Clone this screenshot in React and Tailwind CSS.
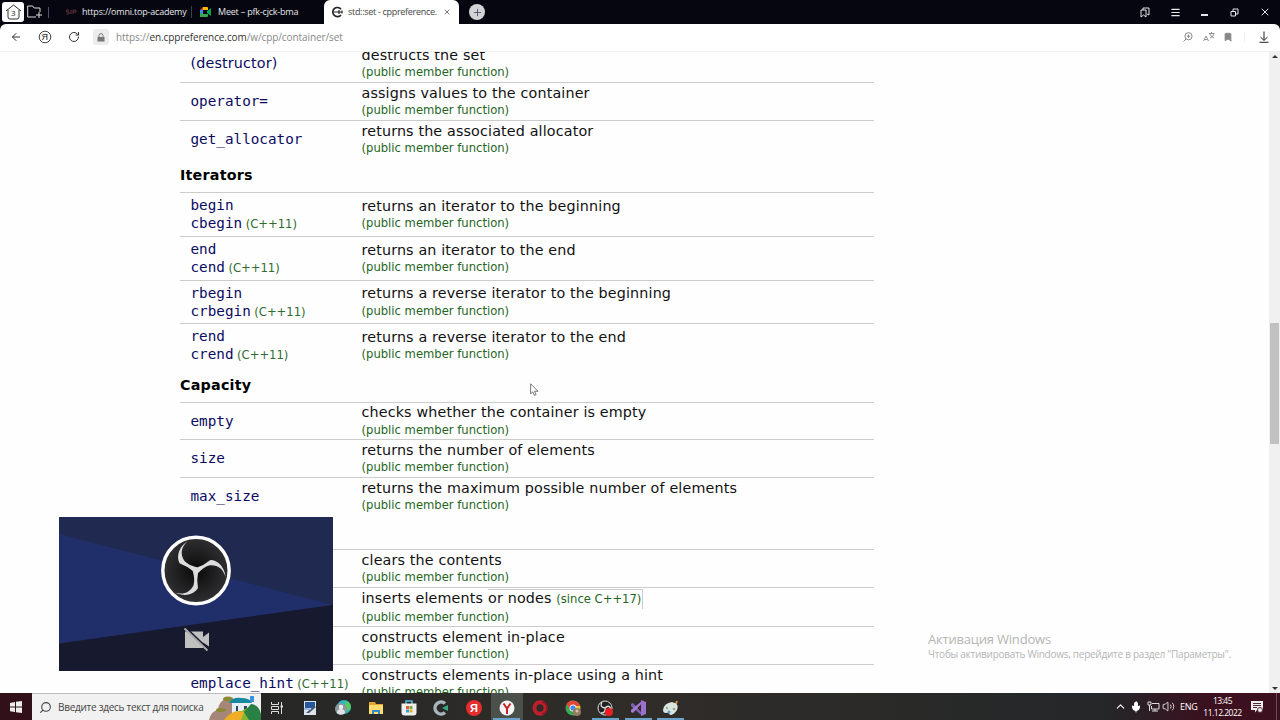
import {
    ArrowLeft,
    Bookmark,
    ChevronUp,
    Menu,
    Mic,
    Plus,
    RotateCw,
    Search,
    Volume2,
    X,
} from "lucide-react";

const sections = [
    {
        title: null,
        rows: [
            { names: ["(destructor)"], plain: true, text: "destructs the set", height: "h-[38px]" },
            { names: ["operator="], text: "assigns values to the container", height: "h-[38px]" },
            { names: ["get_allocator"], text: "returns the associated allocator", height: "h-[38px]" },
        ],
    },
    {
        title: "Iterators",
        titleHeight: "h-[34px]",
        rows: [
            { names: ["begin", "cbegin"], text: "returns an iterator to the beginning", height: "h-[44px]" },
            { names: ["end", "cend"], text: "returns an iterator to the end", height: "h-[44px]" },
            { names: ["rbegin", "crbegin"], text: "returns a reverse iterator to the beginning", height: "h-[43px]" },
            { names: ["rend", "crend"], text: "returns a reverse iterator to the end", height: "h-[44px]" },
        ],
    },
    {
        title: "Capacity",
        titleHeight: "h-[35px]",
        rows: [
            { names: ["empty"], text: "checks whether the container is empty", height: "h-[37px]" },
            { names: ["size"], text: "returns the number of elements", height: "h-[38px]" },
            { names: ["max_size"], text: "returns the maximum possible number of elements", height: "h-[38px]" },
        ],
    },
    {
        // the heading and the first names of this group sit behind the camera preview
        title: "",
        titleHeight: "h-[34px]",
        rows: [
            { names: [], text: "clears the contents", height: "h-[38px]" },
            { names: [], text: "inserts elements", since: true, height: "h-[39px]" },
            { names: [], text: "constructs element in-place", height: "h-[38px]" },
            { names: ["emplace_hint"], version: true, text: "constructs elements in-place using a hint", height: "h-[38px]" },
        ],
    },
];

function MemberRow({ row }) {
    return (
        <div className={`flex shrink-0 items-center border-t border-[#ccc] ${row.height}`}>
            <div className="w-[181.5px] shrink-0 whitespace-nowrap pb-px pl-[10.5px] text-[#0b0b62]">
                {row.names.map((name, i) => (
                    <div key={name} className="h-[17.6px] leading-[17.6px]">
                        <span
                            className={
                                row.plain
                                    ? "text-[14.3px] tracking-[.15px]"
                                    : "font-['DejaVu_Sans_Mono',monospace] text-[14.3px]"
                            }
                        >
                            {name}
                        </span>
                        {(i === 1 || row.version) && (
                            <span className="ml-[3.5px] text-[11.6px] text-[#2f6b2f]">(C++11)</span>
                        )}
                    </div>
                ))}
            </div>
            <div className="whitespace-nowrap pt-px leading-[17.5px]">
                <div className="text-[14.3px] tracking-[.15px] text-[#111]">
                    {row.text}
                    {row.since && (
                        <span className="ml-[5px] inline-block border-r border-t border-[#ccc] pr-px">
                            or nodes <span className="text-[11.6px] tracking-normal text-[#1f651f]">(since C++17)</span>
                        </span>
                    )}
                </div>
                <div className="text-[11.6px] text-[#1f651f]">(public member function)</div>
            </div>
        </div>
    );
}

function TabBar() {
    return (
        <div className="flex h-6 shrink-0 items-center bg-[#05060f] font-['Open_Sans','Noto_Sans',sans-serif] text-[9px] tracking-[-.2px] text-gray-200">
            <div className="ml-0.5 flex h-[20px] w-[22px] items-center justify-center rounded-[3px] bg-white">
                <svg width="17" height="16" viewBox="0 0 17 16" fill="none" stroke="#333">
                    <path d="M1 7 8.5 1 16 7M3 6v7q0 2 2 2h7q2 0 2-2V6" />
                    <text x="6" y="11.5" fontSize="8" fill="#222" stroke="none">3</text>
                </svg>
            </div>
            <svg className="ml-[3px]" width="16" height="14" viewBox="0 0 16 14" fill="none" stroke="#ddd">
                <path d="M9 12H.7V1h5l1.5 2H13v4M12 7v6M9 10h6" />
            </svg>
            <div className="ml-[5px] h-[11px] w-px bg-gray-600" />
            <svg className="ml-[17px]" width="11" height="6" viewBox="0 0 11 6" fill="none" stroke="#63303f">
                <path d="M3 1H.5v2H3v2H.5M5 1v4M7 5V1h3v2H7" />
            </svg>
            <div className="ml-[5px] w-[109px] whitespace-nowrap">https://omni.top-academy</div>
            <div className="h-3 w-px bg-gray-700" />
            <svg className="ml-[7px]" width="12" height="10" viewBox="0 0 12 10">
                <path d="M1 3 4 0v3z" fill="#e94235" />
                <path d="M1 3h3v4H1z" fill="#4285f4" />
                <path d="M4 0h4q1 0 1 1v2H4z" fill="#fbbc04" />
                <path d="M1 6h3v1h5v2q0 1-1 1H1z" fill="#34a853" />
                <path d="M8 4 12 1v8L8 6z" fill="#00a550" />
            </svg>
            <div className="ml-[7px] w-[106px] whitespace-nowrap">Meet – pfk-cjck-bma</div>
            <div className="flex h-full w-[135px] items-center rounded-t-[6px] bg-white pl-[7px] text-[#444]">
                <svg width="12" height="12" viewBox="0 0 12 12" fill="none" stroke="#222" strokeWidth="1.7">
                    <path d="M10 3.2A4.6 4.6 0 1 0 10 9" />
                    <path d="M3 6h8M8 4v4M11 4.5v3" strokeWidth="1.2" />
                </svg>
                <span className="ml-[5px] w-[92px] whitespace-nowrap tracking-[-.3px]">
                    std::set - cppreference.
                </span>
                <X className="ml-[3px]" size={8} strokeWidth={2.2} />
            </div>
            <div className="ml-[10px] flex size-4 items-center justify-center rounded-full bg-[#d2d2d7] text-gray-600">
                <Plus size={11} />
            </div>
            <div className="ml-auto flex items-center text-gray-200">
                <svg width="10" height="11" viewBox="0 0 10 11" fill="none" stroke="currentColor">
                    <path d="M1 3h5v7L3.5 8 1 10zM3 3V1h6v7l-2-1" />
                </svg>
                <Menu className="ml-[20px]" size={11} strokeWidth={2.7} />
                <div className="ml-[20px] mt-[6px] h-[1.5px] w-[7px] bg-gray-200" />
                <svg className="ml-[22px]" width="9" height="9" viewBox="0 0 9 9" fill="none" stroke="currentColor">
                    <path d="M1 3.5h4.5V8H1zM3 3V1h5v5H6" />
                </svg>
                <X className="ml-[20px] mr-[9px]" size={12} />
            </div>
        </div>
    );
}

function AddressBar() {
    return (
        <div className="shrink-0 bg-[#05060f]">
            <div className="flex h-7 items-center rounded-t-[6px] border-b border-[#f0f0f0] bg-white pb-px text-[#333]">
                <ArrowLeft className="ml-[10px]" size={12} />
                <svg className="ml-[16px]" width="14" height="14" viewBox="0 0 14 14" fill="none" stroke="#444">
                    <circle cx="7" cy="7" r="5.8" />
                    <text x="3.6" y="10.2" fontSize="9" fill="#222" stroke="none" fontFamily="Liberation Sans">Я</text>
                </svg>
                <RotateCw className="ml-[16px]" size={12} />
                <div className="ml-[13px] flex size-4 items-center justify-center rounded-[3px] bg-[#ececec] text-[#777]">
                    <svg width="8" height="9" viewBox="0 0 8 9">
                        <path d="M.5 4h7v4.500h-7z" fill="currentColor" />
                        <path d="M2 4V2.500q0-1.800 2-1.800t2 1.800V4" fill="none" stroke="currentColor" />
                    </svg>
                </div>
                <div className="ml-[7px] whitespace-nowrap font-['Open_Sans','Noto_Sans',sans-serif] text-[10px] tracking-[-.09px] text-[#888]">
                    https://<span className="text-[#333]">en.cppreference.com</span>/w/cpp/container/set
                </div>
                <div className="ml-auto flex items-center text-[#888]">
                    <svg width="10" height="10" viewBox="0 0 10 10" fill="none" stroke="currentColor">
                        <circle cx="5.5" cy="4.2" r="3.6" />
                        <path d="M3 7 .5 9.5M3.8 4.2h3.5M5.5 2.5V6" />
                    </svg>
                    <svg className="ml-[10px]" width="12" height="10" viewBox="0 0 12 10" fill="none" stroke="currentColor" strokeWidth=".9">
                        <path d="m.5 9 2.500-5 2.500 5M1.500 7.500h3M6 1.500h5.500M8.500 0v1.500M7 2q1 3 4 4M11 2q-1 3-4 4" />
                    </svg>
                    <Bookmark className="ml-[8px]" size={10} fill="currentColor" />
                    <div className="ml-[11px] h-[10px] w-px bg-[#eee]" />
                    <svg className="ml-[14px] mr-[11px] text-[#222]" width="10" height="12" viewBox="0 0 10 12" fill="none" stroke="currentColor">
                        <path d="M5 .5v8.8M1.5 6 5 9.4 8.5 6M.5 11.3h9" />
                    </svg>
                </div>
            </div>
        </div>
    );
}

function ObsPreview() {
    return (
        <svg className="absolute left-[59px] top-[517px]" width="274" height="153.5" viewBox="0 0 274 153.5">
            <defs>
                <radialGradient id="disc">
                    <stop offset="0" stopColor="#080808" />
                    <stop offset=".45" stopColor="#1c1b1c" />
                    <stop offset="1" stopColor="#302f31" />
                </radialGradient>
            </defs>
            <path d="M0 0h274v154H0z" fill="#20294f" />
            <path d="M0 17 274 88 0 127z" fill="#202f69" />
            <path d="M0 126.500 274 88v66H0z" fill="#17192f" />
            <circle cx="137" cy="53.500" r="33.200" fill="url(#disc)" stroke="#fff" strokeWidth="3.400" />
            <g fill="#dcdcdc">
                <path id="blade" d="M128 24.500C117.500 32 118 43 121 46.500Q129 49.500 134.500 54.500L138.500 50.500Q130 48.500 125.500 44C121 37 122 31 128 24.500Z" />
                <use href="#blade" transform="rotate(120 137 53.500)" />
                <use href="#blade" transform="rotate(240 137 53.500)" />
                <circle cx="137" cy="53.500" r="2.800" />
            </g>
            <path d="M126 114.500h18v5.500l6-4.500v14l-6-4v5.500h-18z" fill="#c0c0c0" />
            <path d="m127 111 23 22" stroke="#17192f" strokeWidth="2" />
            <path d="m125.500 111.500 23 22" stroke="#aaa" strokeWidth="2" />
        </svg>
    );
}

function SearchArt() {
    return (
        <svg className="ml-auto" width="52" height="26" viewBox="0 0 52 26">
            <path d="M0 26q2-9 9-10 1-10 10-12 6 1 5 11l-2 11z" fill="#a58678" />
            <ellipse cx="19" cy="5" rx="5" ry="2.500" fill="#8c8936" />
            <ellipse cx="12" cy="16" rx="5" ry="2" fill="#8c8936" />
            <path d="M23 8h18v17H23z" fill="#e5eef3" />
            <path d="M20 9q3-6 12-5 9 0 11 5z" fill="#1688a0" />
            <path d="M27 12h2v5h-2zM35 12h3v6h-3z" fill="#344655" />
            <path d="M15 26q8-10 18-9 10-8 19 4v5z" fill="#83b632" />
            <path d="M15 26q8-11 20-8l-3 8z" fill="#f0ad25" />
            <path d="m35 18 7-8q8 1 10 10v6H40z" fill="#2a8145" />
            <path d="M41 2h4v6h-4z" fill="#3b92e1" />
        </svg>
    );
}

function AppIcon({ name }) {
    const icons = {
        tasks: (
            <g fill="none" stroke="#ddd">
                <path d="M4.500 4v2.500h7V4M4.500 16v-2.500h7V16M4.500 8.500h7v3h-7zM14.500 4v12" />
                <path d="M13.500 8.500h2.500" strokeWidth="2" />
            </g>
        ),
        monitor: (
            <>
                <path d="M4 3h12v14H4z" fill="#dce5ed" />
                <path d="M5 4h10v6H5z" fill="#24579b" />
                <path d="m6 15 8-7 2 1-7 6z" fill="#46566b" />
                <path d="M4 10h5l2 2H4z" fill="#98bae5" />
            </>
        ),
        edge: (
            <>
                <circle cx="11" cy="9" r="7" fill="#28b8c8" />
                <path d="M12 3q8 2 5 9l-5 1z" fill="#55cc62" />
                <circle cx="8" cy="11" r="6" fill="#8a98a0" />
                <circle cx="8" cy="9" r="2.200" fill="#eee" />
                <path d="M4 15q0-4 4-4t4 4q-4 3-8 0z" fill="#e2e2e2" />
            </>
        ),
        folder: (
            <>
                <path d="M3 4h6l1 2h7v10H3z" fill="#e2a82d" />
                <path d="M3 7h14v9H3z" fill="#ffdd70" />
                <path d="M6 12h8v4h-2v-2H8v2H6z" fill="#368bc5" />
            </>
        ),
        store: (
            <>
                <path d="M7 6V3h6v3" fill="none" stroke="#54bde6" strokeWidth="1.500" />
                <path d="M2.500 5.500h15v9q0 3-3 3h-9q-3 0-3-3z" fill="#eee" />
                <path d="M7 8h3v3H7z" fill="#e35a3c" />
                <path d="M10.500 8h3v3h-3z" fill="#7dad36" />
                <path d="M7 11.500h3v3H7z" fill="#389ed3" />
                <path d="M10.500 11.500h3v3h-3z" fill="#e2ae25" />
            </>
        ),
        cpp: (
            <>
                <path d="M14 5.500A6 6 0 1 0 14 14.500" fill="none" stroke="#a7b5bd" strokeWidth="3.500" />
                <path d="m11 10 6-3v6z" fill="#37a985" />
            </>
        ),
        yandex: (
            <>
                <circle cx="10" cy="10" r="8" fill="#e52d2b" />
                <text x="6" y="14" fontSize="11" fontWeight="bold" fill="#fff" fontFamily="Liberation Sans">Я</text>
            </>
        ),
        browser: (
            <>
                <circle cx="10" cy="10" r="7.500" fill="#f5f5f5" />
                <path d="m6.500 5.500 3.500 5 3.500-5M10 10v6" fill="none" stroke="#c62328" strokeWidth="2" />
            </>
        ),
        opera: (
            <>
                <ellipse cx="10" cy="10" rx="5.500" ry="5.800" fill="none" stroke="#bd202c" strokeWidth="4" />
                <path d="M12 4q5 1 5 6t-5 6" fill="none" stroke="#8d1722" strokeWidth="1.500" />
            </>
        ),
        chrome: (
            <>
                <circle cx="10" cy="10" r="7.500" fill="#38a852" />
                <path d="M3.500 6Q7 1 12 3q4 1 5 5h-7L7 12z" fill="#e64638" />
                <path d="M10 8h7.300q.8 7-7 9.500L13 12z" fill="#f5c52c" />
                <circle cx="10" cy="10" r="3.500" fill="#eee" />
                <circle cx="10" cy="10" r="2.600" fill="#4389e8" />
                <circle cx="14" cy="14" r="4" fill="#937a62" />
                <circle cx="14" cy="13" r="1.500" fill="#d6c2a5" />
            </>
        ),
        obs: (
            <>
                <circle cx="10" cy="10" r="7" fill="#222" stroke="#ddd" />
                <path d="M7 4q-3 5 3 6 4-4 6 1M10 10q1 5-4 5" fill="none" stroke="#ddd" strokeWidth="1.400" />
                <circle cx="14" cy="14" r="4" fill="#ed1d24" />
            </>
        ),
        studio: (
            <>
                <path d="m3 6 2-1 8 9 1 3-2-1-9-8z" fill="#8060b7" />
                <path d="m3 14 2 1 9-10V3L3 12z" fill="#a57bd2" />
                <path d="m13 2 5 2v12l-5 2z" fill="#9b70cf" />
            </>
        ),
        paint: (
            <>
                <path d="M16 3 12 13" stroke="#d29045" strokeWidth="2" />
                <path d="M2 12q1-7 9-8 8 2 5 8-3 5-7 5-1-3-4-2-3 0-3-3z" fill="#dce4df" />
                <circle cx="6" cy="10" r="1.200" fill="#8fb8a0" />
                <circle cx="13" cy="11" r="1.200" fill="#8ea67a" />
                <circle cx="8" cy="14" r="1.500" fill="#57a3c5" />
            </>
        ),
    };
    return <svg width="20" height="20" viewBox="0 0 20 20">{icons[name]}</svg>;
}

const apps = ["tasks", "monitor", "edge", "folder", "store", "cpp", "yandex", "browser", "opera", "chrome", "obs", "studio", "paint"];
const running = ["browser", "obs", "studio", "paint"];

function Taskbar() {
    return (
        <div className="flex h-[27px] shrink-0 bg-linear-to-r from-[#202323] via-[#302d29] to-[#202428] font-['Open_Sans','Noto_Sans',sans-serif] text-white">
            <div className="flex w-8 items-center justify-center bg-[#321019]">
                <svg width="12" height="12" viewBox="0 0 12 12" fill="#eee">
                    <path d="M0 2 5 1v4.500H0zM6 .8 12 0v5.500H6zM0 6.500h5V11l-5-.8zM6 6.500h6V12l-6-.8z" />
                </svg>
            </div>
            <div className="flex w-[229px] items-center border-t border-[#bbb] bg-[#f1f1f1] text-[#444]">
                <Search className="ml-[7px] shrink-0 -scale-x-100" size={13} />
                <span className="ml-[6px] whitespace-nowrap text-[10px] tracking-[-.27px]">Введите здесь текст для поиска</span>
                <SearchArt />
            </div>
            <div className="flex">
                {apps.map((app) => (
                    <div key={app} className={`flex w-[32.8px] flex-col items-center ${app === "browser" ? "bg-[#4b504b]" : ""}`}>
                        <div className="flex h-[25px] items-center pt-1">
                            <AppIcon name={app} />
                        </div>
                        {running.includes(app) && <div className="h-0.5 w-[27px] bg-[#6ba2cb]" />}
                    </div>
                ))}
            </div>
            <div className="ml-auto flex w-[172px] items-center bg-linear-to-r from-transparent to-[#3c101e] to-60%">
                <ChevronUp className="ml-[6px]" size={13} />
                <Mic className="ml-[3px]" size={12} fill="white" />
                <svg className="ml-[5px]" width="13" height="11" viewBox="0 0 13 11" fill="none" stroke="#ddd">
                    <path d="M5 2.500h7v5.500H4.500V5M5 10h6M8 8v2M1 1h3v3H1zM2.500 4v6" />
                </svg>
                <Volume2 className="ml-[2px]" size={13} strokeWidth={1.5} />
                <div className="ml-[5px] w-[17px] text-[9px] tracking-[-.3px]">ENG</div>
                <div className="ml-[7px] flex w-[37px] flex-col items-center whitespace-nowrap text-[8.5px] leading-[12px] tracking-[-.5px]">
                    <div>13:45</div>
                    <div>11.12.2022</div>
                </div>
                <svg className="ml-[10px]" width="12" height="12" viewBox="0 0 12 12">
                    <path d="M0 0h12v9H6l-2 2.500V9H0z" fill="#eee" />
                    <path d="M2 2.500h8M2 4.500h8M2 6.500h4" stroke="#552534" />
                    <circle cx="9" cy="9" r="2.500" fill="#eee" stroke="#552534" />
                </svg>
                <div className="ml-auto mr-[3px] h-full w-px bg-[#66505a]" />
            </div>
        </div>
    );
}

function App() {
    return (
        <div className="relative flex h-[720px] w-[1280px] flex-col overflow-hidden bg-[#fefefe]">
            <TabBar />
            <AddressBar />
            <main className="flex min-h-0 flex-1 overflow-hidden font-['DejaVu_Sans',sans-serif]">
                <div className="-mt-2 ml-[180px] flex w-[694px] flex-col">
                    {sections.map((section, i) => (
                        <section key={i} className="shrink-0">
                            {section.titleHeight && (
                                <h3 className={`flex items-center pt-0.5 text-[14.3px] font-bold tracking-[.22px] text-black ${section.titleHeight}`}>
                                    {section.title}
                                </h3>
                            )}
                            {section.rows.map((row) => (
                                <MemberRow key={row.text} row={row} />
                            ))}
                        </section>
                    ))}
                </div>
                <div className="ml-auto flex w-[11px] flex-col items-center justify-between bg-[#f0f0f0] py-[3px]">
                    <div className="border-x-[3px] border-b-[3px] border-x-transparent border-b-[#333]" />
                    <div className="mt-[22px] h-[121px] w-[9px] bg-[#c1c1c1]" />
                    <div className="border-x-[3px] border-t-[3px] border-x-transparent border-t-[#333]" />
                </div>
            </main>
            <Taskbar />
            <ObsPreview />
            <svg className="absolute left-[530px] top-[383px]" width="9" height="14" viewBox="0 0 9 14" fill="white" stroke="#555" strokeWidth=".8">
                <path d="M.6.800v10l2.200-2 1.600 3.600 1.700-.8-1.600-3.300H8z" />
            </svg>
            <div className="absolute left-[928px] top-[631px] whitespace-nowrap font-['Open_Sans','Noto_Sans',sans-serif] text-[#b5b5b5]">
                <div className="text-[13px] leading-4 tracking-[-.2px]">Активация Windows</div>
                <div className="text-[10px] leading-[14px] tracking-[-.26px]">Чтобы активировать Windows, перейдите в раздел "Параметры".</div>
            </div>
        </div>
    );
}

export default App;
